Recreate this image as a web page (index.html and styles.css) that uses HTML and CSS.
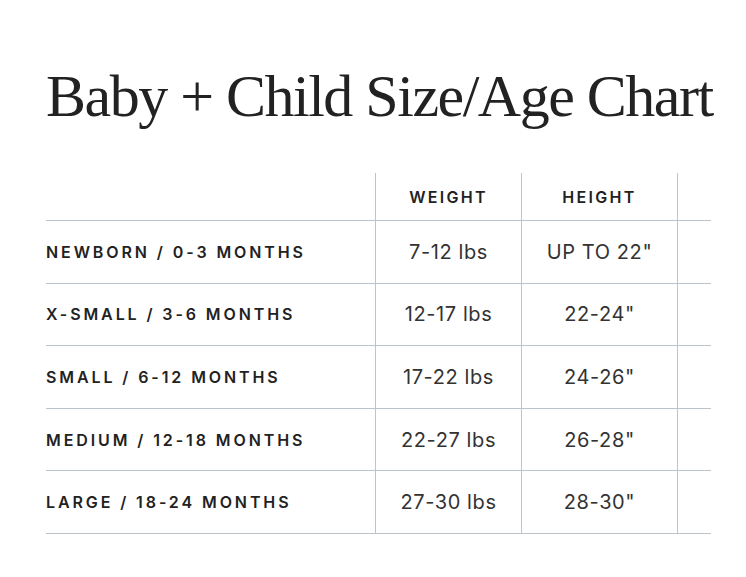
FILE: index.html
```html
<!DOCTYPE html>
<html>
<head>
<meta charset="utf-8">
<link rel="stylesheet" href="styles.css">
</head>
<body>
<main class="page">
  <h1 class="title">Baby + Child Size/Age Chart</h1>
  <table class="chart">
    <thead>
      <tr>
        <th class="label-col"></th>
        <th class="val-col w">WEIGHT</th>
        <th class="val-col h">HEIGHT</th>
        <th class="extra"></th>
      </tr>
    </thead>
    <tbody>
      <tr><td class="label">NEWBORN / 0-3 MONTHS</td><td class="val">7-12 lbs</td><td class="val">UP TO 22"</td><td class="extra"></td></tr>
      <tr><td class="label">X-SMALL / 3-6 MONTHS</td><td class="val">12-17 lbs</td><td class="val">22-24"</td><td class="extra"></td></tr>
      <tr><td class="label">SMALL / 6-12 MONTHS</td><td class="val">17-22 lbs</td><td class="val">24-26"</td><td class="extra"></td></tr>
      <tr><td class="label">MEDIUM / 12-18 MONTHS</td><td class="val">22-27 lbs</td><td class="val">26-28"</td><td class="extra"></td></tr>
      <tr><td class="label">LARGE / 18-24 MONTHS</td><td class="val">27-30 lbs</td><td class="val">28-30"</td><td class="extra"></td></tr>
    </tbody>
  </table>
</main>
</body>
</html>
```
FILE: styles.css
```css
html, body {
  margin: 0;
  padding: 0;
  background: #fff;
}
.page {
  padding: 56px 35px 0 46px;
}
.title {
  margin: 0;
  font-family: "Liberation Serif", serif;
  font-weight: 400;
  font-size: 60px;
  line-height: 80px;
  color: #222;
  letter-spacing: -1.5px;
  white-space: nowrap;
}
.chart {
  margin-top: 37px;
  width: 665px;
  border-collapse: collapse;
  table-layout: fixed;
  font-family: Inter, "Liberation Sans", sans-serif;
  color: #222;
}
.chart th, .chart td {
  padding: 0;
  border-bottom: 1px solid #bcc3cb;
}
.label-col { width: 329px; }
.w { width: 145px; }
.h { width: 155px; }
.chart th {
  height: 47px;
  font-size: 16px;
  font-weight: 600;
  letter-spacing: 2.3px;
  text-align: center;
}
.chart th.val-col, .chart td.val {
  border-left: 1px solid #bcc3cb;
}
.chart th.extra, .chart td.extra {
  border-left: 1px solid #bcc3cb;
}
.chart td {
  height: 61.6px;
}
.label {
  font-size: 16px;
  font-weight: 600;
  letter-spacing: 2.9px;
}
.val {
  text-align: center;
  font-size: 20px;
  font-weight: 400;
  letter-spacing: 0.6px;
  color: #333;
}
```
